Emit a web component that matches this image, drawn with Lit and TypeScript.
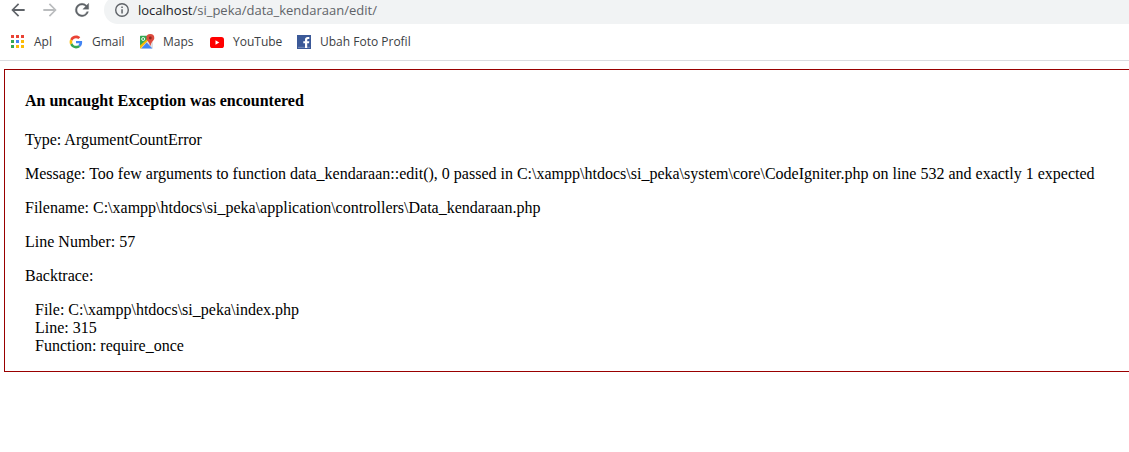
import { LitElement, html, css, svg } from "lit";
import { customElement } from "lit/decorators.js";

const appsColors = ["#ea4335", "#ea4335", "#ea4335", "#34a853", "#4285f4", "#fbbc05", "#34a853", "#fbbc05", "#fbbc05"];

const appsIcon = html`<svg class="icon" viewBox="0 0 16 16" shape-rendering="crispEdges" aria-hidden="true">
  ${appsColors.map((c, i) => svg`<rect x=${1 + (i % 3) * 5} y=${1 + Math.floor(i / 3) * 5} width="3" height="3" fill=${c}></rect>`)}
</svg>`;

const googleIcon = html`<svg class="icon" viewBox="-6 -6 60 60" aria-hidden="true">
  <path fill="#EA4335" d="M24 9.5c3.54 0 6.71 1.22 9.21 3.6l6.85-6.85C35.9 2.38 30.47 0 24 0 14.62 0 6.51 5.38 2.56 13.22l7.98 6.19C12.43 13.72 17.74 9.5 24 9.5z"></path>
  <path fill="#4285F4" d="M46.98 24.55c0-1.57-.15-3.09-.38-4.55H24v9.02h12.94c-.58 2.96-2.26 5.48-4.78 7.18l7.73 6c4.51-4.18 7.09-10.36 7.09-17.65z"></path>
  <path fill="#FBBC05" d="M10.53 28.59c-.48-1.45-.76-2.99-.76-4.59s.27-3.14.76-4.59l-7.98-6.19C.92 16.46 0 20.12 0 24s.92 7.54 2.56 10.78l7.97-6.19z"></path>
  <path fill="#34A853" d="M24 48c6.48 0 11.93-2.13 15.89-5.81l-7.73-6c-2.15 1.45-4.92 2.3-8.16 2.3-6.26 0-11.57-4.22-13.47-9.91l-7.98 6.19C6.51 42.62 14.62 48 24 48z"></path>
</svg>`;

const mapsIcon = html`<svg class="icon" viewBox="0 0 16 16" aria-hidden="true">
  <path fill="#34a853" d="M1.600 1.800H10L12 5 1 13V2.400q0-.600.600-.600z"></path>
  <path fill="#fbbc05" d="M1 11.500 10 3.500 12 5.500 3 14.500H1z"></path>
  <path fill="#dfe1e5" d="M1.500 14.500 10 5.500 14 8.500V14q0 .500-.500.500z"></path>
  <path fill="#4285f4" d="M7.700 8.600 13.400 14.500H2.200z"></path>
  <circle cx="4.200" cy="5" r="1.500" fill="none" stroke="#fff" stroke-width=".9"></circle>
  <path fill="#dd4b3e" d="M11.300 0a4 4 0 0 1 4 4c0 2.800-3.200 3.700-3.600 7.500h-.8C10.500 7.700 7.300 6.800 7.300 4a4 4 0 0 1 4-4z"></path>
  <circle cx="11.300" cy="4" r="1.400" fill="#8c2a20"></circle>
</svg>`;

const youtubeIcon = html`<svg class="icon" viewBox="0 0 16 16" aria-hidden="true">
  <rect x="1" y="3" width="14" height="11" rx="2.600" fill="#f00"></rect>
  <path d="M6.500 6.200v4.500L10.300 8.450z" fill="#fff"></path>
</svg>`;

const facebookIcon = html`<svg class="icon" viewBox="0 0 16 16" aria-hidden="true">
  <rect x="1" y="1" width="14" height="14" fill="#3b5998"></rect>
  <rect x="2" y="12.800" width="12" height="1.200" fill="#6d84b4"></rect>
  <path fill="#fff" d="M9 14V9.200H7.300V7.200H9V5.700C9 3.800 10.100 2.900 11.700 2.900H13.300V4.900H12.300c-.8 0-1.100.4-1.100 1.100v1.200h2.100L13 9.200h-1.800V14z"></path>
</svg>`;

const bookmarks = [
  { label: "Apl", icon: appsIcon },
  { label: "Gmail", icon: googleIcon },
  { label: "Maps", icon: mapsIcon },
  { label: "YouTube", icon: youtubeIcon },
  { label: "Ubah Foto Profil", icon: facebookIcon },
];

@customElement("browser-chrome")
export class BrowserChrome extends LitElement {
  static styles = css`
    :host {
      display: block;
      background: #fff;
      border-bottom: 1px solid #dadce0;
      font-family: "Open Sans", "Noto Sans", sans-serif;
    }
    .toolbar {
      display: flex;
      align-items: flex-end;
      height: 24px;
      overflow: hidden;
      padding-left: 8px;
    }
    .nav {
      display: flex;
      flex: none;
      gap: 12px;
      margin-right: 12px;
    }
    .nav-button {
      display: flex;
      align-items: center;
      justify-content: center;
      width: 20px;
      height: 28px;
      padding: 0;
      border: 0;
      background: none;
      color: #5f6368;
    }
    .nav-button:disabled {
      color: #babcbe;
    }
    .glyph {
      display: block;
      width: 20px;
      height: 20px;
      flex: none;
      fill: currentColor;
    }
    .address {
      display: flex;
      align-items: center;
      flex: 1;
      gap: 8px;
      height: 28px;
      padding-left: 10px;
      border-radius: 14px 0 0 14px;
      background: #f1f3f4;
      color: #5f6368;
      font-size: 13px;
      line-height: 20px;
    }
    .info {
      display: block;
      width: 16px;
      height: 16px;
      flex: none;
    }
    .host {
      color: #202124;
    }
    .bookmarks {
      display: grid;
      grid-template-columns: 58px 71px 70px 87px auto;
      justify-content: start;
      align-items: center;
      height: 36px;
      padding-left: 10px;
    }
    .bookmark {
      display: flex;
      align-items: center;
      gap: 8px;
      color: #3c4043;
      font-size: 12px;
      line-height: 16px;
      text-decoration: none;
      white-space: nowrap;
    }
    .icon {
      display: block;
      width: 16px;
      height: 16px;
      flex: none;
    }
  `;

  render() {
    return html`
      <div class="toolbar">
        <div class="nav">
          <button class="nav-button" aria-label="Kembali">
            <svg class="glyph" viewBox="0 0 24 24"><path d="M20 10.800H7.830l5.590-5.390L12 4l-8 8 8 8 1.410-1.410L7.830 13.200H20v-2.400z"></path></svg>
          </button>
          <button class="nav-button" aria-label="Maju" disabled>
            <svg class="glyph" viewBox="0 0 24 24"><path d="M12 4l-1.410 1.410L16.170 10.800H4v2.400h12.170l-5.580 5.390L12 20l8-8z"></path></svg>
          </button>
          <button class="nav-button" aria-label="Muat ulang">
            <svg class="glyph" viewBox="0 0 24 24"><path d="M17.650 6.350A7.958 7.958 0 0 0 12 4a8 8 0 1 0 7.730 10h-2.080A5.990 5.990 0 0 1 12 18a6 6 0 1 1 0-12c1.660 0 3.140.690 4.220 1.780L13 11h7V4l-2.350 2.350z" stroke="currentColor" stroke-width=".4"></path></svg>
          </button>
        </div>
        <div class="address">
          <svg class="info" viewBox="0 0 16 16" aria-hidden="true">
            <circle cx="8" cy="8" r="6.300" fill="none" stroke="#5f6368" stroke-width="1.400"></circle>
            <path d="M7.300 7.200h1.500v4.200H7.300zM7.300 4.600h1.500v1.500H7.300z" fill="#5f6368"></path>
          </svg>
          <span><span class="host">localhost</span>/si_peka/data_kendaraan/edit/</span>
        </div>
      </div>
      <nav class="bookmarks">
        ${bookmarks.map((b) => html`<a class="bookmark" href="#">${b.icon}<span>${b.label}</span></a>`)}
      </nav>
    `;
  }
}

@customElement("exception-report")
export class ExceptionReport extends LitElement {
  static styles = css`
    :host {
      display: block;
      margin: 8px 0 0 4px;
      padding-left: 20px;
      border: 1px solid #990000;
      border-right: 0;
      color: #000;
      font-family: "Liberation Serif", "Times New Roman", serif;
      font-size: 16px;
      line-height: 18px;
    }
    .title {
      margin: 22px 0 21px;
      font-size: 16px;
      font-weight: bold;
    }
    .line {
      margin: 16px 0;
    }
    .frame {
      margin: 16px 0 16px 10px;
    }
  `;

  render() {
    return html`
      <h4 class="title">An uncaught Exception was encountered</h4>
      <p class="line">Type: ArgumentCountError</p>
      <p class="line">Message: Too few arguments to function data_kendaraan::edit(), 0 passed in C:\\xampp\\htdocs\\si_peka\\system\\core\\CodeIgniter.php on line 532 and exactly 1 expected</p>
      <p class="line">Filename: C:\\xampp\\htdocs\\si_peka\\application\\controllers\\Data_kendaraan.php</p>
      <p class="line">Line Number: 57</p>
      <p class="line">Backtrace:</p>
      <p class="frame">
        File: C:\\xampp\\htdocs\\si_peka\\index.php<br />
        Line: 315<br />
        Function: require_once
      </p>
    `;
  }
}

@customElement("app-root")
export class AppRoot extends LitElement {
  static styles = css`
    :host {
      display: block;
      min-height: 100vh;
      background: #fff;
    }
  `;

  render() {
    return html`
      <browser-chrome></browser-chrome>
      <exception-report></exception-report>
    `;
  }
}
